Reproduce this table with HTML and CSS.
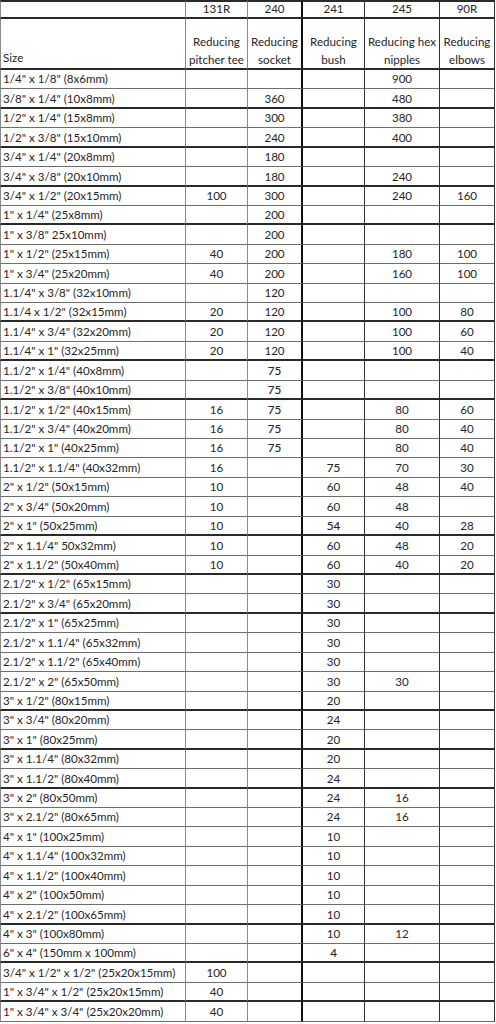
FILE: index.html
```
<!DOCTYPE html>
<html>
<head>
<meta charset="utf-8">
<link rel="stylesheet" href="styles.css">
</head>
<body>
<div class="sheet">
  <div class="row thick top">
    <div class="c s"></div><div class="c n">131R</div><div class="c n c3">240</div><div class="c n">241</div><div class="c n">245</div><div class="c n">90R</div>
  </div>
  <div class="row thick head">
    <div class="c s">Size</div><div class="c n">Reducing<br>pitcher tee</div><div class="c n c3">Reducing<br>socket</div><div class="c n">Reducing<br>bush</div><div class="c n">Reducing hex<br>nipples</div><div class="c n">Reducing<br>elbows</div>
  </div>
  <div class="row"><div class="c s">1/4" x 1/8" (8x6mm)</div><div class="c n"></div><div class="c n c3"></div><div class="c n"></div><div class="c n">900</div><div class="c n"></div></div>
  <div class="row thick"><div class="c s">3/8" x 1/4" (10x8mm)</div><div class="c n"></div><div class="c n c3">360</div><div class="c n"></div><div class="c n">480</div><div class="c n"></div></div>
  <div class="row"><div class="c s">1/2" x 1/4" (15x8mm)</div><div class="c n"></div><div class="c n c3">300</div><div class="c n"></div><div class="c n">380</div><div class="c n"></div></div>
  <div class="row thick"><div class="c s">1/2" x 3/8" (15x10mm)</div><div class="c n"></div><div class="c n c3">240</div><div class="c n"></div><div class="c n">400</div><div class="c n"></div></div>
  <div class="row"><div class="c s">3/4" x 1/4" (20x8mm)</div><div class="c n"></div><div class="c n c3">180</div><div class="c n"></div><div class="c n"></div><div class="c n"></div></div>
  <div class="row thick"><div class="c s">3/4" x 3/8" (20x10mm)</div><div class="c n"></div><div class="c n c3">180</div><div class="c n"></div><div class="c n">240</div><div class="c n"></div></div>
  <div class="row"><div class="c s">3/4" x 1/2" (20x15mm)</div><div class="c n">100</div><div class="c n c3">300</div><div class="c n"></div><div class="c n">240</div><div class="c n">160</div></div>
  <div class="row thick"><div class="c s">1" x 1/4" (25x8mm)</div><div class="c n"></div><div class="c n c3">200</div><div class="c n"></div><div class="c n"></div><div class="c n"></div></div>
  <div class="row"><div class="c s">1" x 3/8" 25x10mm)</div><div class="c n"></div><div class="c n c3">200</div><div class="c n"></div><div class="c n"></div><div class="c n"></div></div>
  <div class="row"><div class="c s">1" x 1/2" (25x15mm)</div><div class="c n">40</div><div class="c n c3">200</div><div class="c n"></div><div class="c n">180</div><div class="c n">100</div></div>
  <div class="row"><div class="c s">1" x 3/4" (25x20mm)</div><div class="c n">40</div><div class="c n c3">200</div><div class="c n"></div><div class="c n">160</div><div class="c n">100</div></div>
  <div class="row"><div class="c s">1.1/4" x 3/8" (32x10mm)</div><div class="c n"></div><div class="c n c3">120</div><div class="c n"></div><div class="c n"></div><div class="c n"></div></div>
  <div class="row thick"><div class="c s">1.1/4 x 1/2" (32x15mm)</div><div class="c n">20</div><div class="c n c3">120</div><div class="c n"></div><div class="c n">100</div><div class="c n">80</div></div>
  <div class="row"><div class="c s">1.1/4" x 3/4" (32x20mm)</div><div class="c n">20</div><div class="c n c3">120</div><div class="c n"></div><div class="c n">100</div><div class="c n">60</div></div>
  <div class="row thick"><div class="c s">1.1/4" x 1" (32x25mm)</div><div class="c n">20</div><div class="c n c3">120</div><div class="c n"></div><div class="c n">100</div><div class="c n">40</div></div>
  <div class="row"><div class="c s">1.1/2" x 1/4" (40x8mm)</div><div class="c n"></div><div class="c n c3 b">75</div><div class="c n"></div><div class="c n"></div><div class="c n"></div></div>
  <div class="row thick"><div class="c s">1.1/2" x 3/8" (40x10mm)</div><div class="c n"></div><div class="c n c3 b">75</div><div class="c n"></div><div class="c n"></div><div class="c n"></div></div>
  <div class="row"><div class="c s">1.1/2" x 1/2" (40x15mm)</div><div class="c n">16</div><div class="c n c3 b">75</div><div class="c n"></div><div class="c n">80</div><div class="c n">60</div></div>
  <div class="row"><div class="c s">1.1/2" x 3/4" (40x20mm)</div><div class="c n">16</div><div class="c n c3 b">75</div><div class="c n"></div><div class="c n">80</div><div class="c n">40</div></div>
  <div class="row"><div class="c s">1.1/2" x 1" (40x25mm)</div><div class="c n">16</div><div class="c n c3 b">75</div><div class="c n"></div><div class="c n">80</div><div class="c n">40</div></div>
  <div class="row"><div class="c s">1.1/2" x 1.1/4" (40x32mm)</div><div class="c n">16</div><div class="c n c3"></div><div class="c n b">75</div><div class="c n">70</div><div class="c n">30</div></div>
  <div class="row"><div class="c s">2" x 1/2" (50x15mm)</div><div class="c n">10</div><div class="c n c3"></div><div class="c n">60</div><div class="c n">48</div><div class="c n">40</div></div>
  <div class="row"><div class="c s">2" x 3/4" (50x20mm)</div><div class="c n">10</div><div class="c n c3"></div><div class="c n">60</div><div class="c n">48</div><div class="c n"></div></div>
  <div class="row thick"><div class="c s">2" x 1" (50x25mm)</div><div class="c n">10</div><div class="c n c3"></div><div class="c n b">54</div><div class="c n">40</div><div class="c n">28</div></div>
  <div class="row"><div class="c s">2" x 1.1/4" 50x32mm)</div><div class="c n">10</div><div class="c n c3"></div><div class="c n">60</div><div class="c n">48</div><div class="c n">20</div></div>
  <div class="row thick"><div class="c s">2" x 1.1/2" (50x40mm)</div><div class="c n">10</div><div class="c n c3"></div><div class="c n">60</div><div class="c n">40</div><div class="c n">20</div></div>
  <div class="row"><div class="c s">2.1/2" x 1/2" (65x15mm)</div><div class="c n"></div><div class="c n c3"></div><div class="c n">30</div><div class="c n"></div><div class="c n"></div></div>
  <div class="row thick"><div class="c s">2.1/2" x 3/4" (65x20mm)</div><div class="c n"></div><div class="c n c3"></div><div class="c n">30</div><div class="c n"></div><div class="c n"></div></div>
  <div class="row"><div class="c s">2.1/2" x 1" (65x25mm)</div><div class="c n"></div><div class="c n c3"></div><div class="c n">30</div><div class="c n"></div><div class="c n"></div></div>
  <div class="row"><div class="c s">2.1/2" x 1.1/4" (65x32mm)</div><div class="c n"></div><div class="c n c3"></div><div class="c n">30</div><div class="c n"></div><div class="c n"></div></div>
  <div class="row"><div class="c s">2.1/2" x 1.1/2" (65x40mm)</div><div class="c n"></div><div class="c n c3"></div><div class="c n">30</div><div class="c n"></div><div class="c n"></div></div>
  <div class="row"><div class="c s">2.1/2" x 2" (65x50mm)</div><div class="c n"></div><div class="c n c3"></div><div class="c n">30</div><div class="c n">30</div><div class="c n"></div></div>
  <div class="row thick"><div class="c s">3" x 1/2" (80x15mm)</div><div class="c n"></div><div class="c n c3"></div><div class="c n">20</div><div class="c n"></div><div class="c n"></div></div>
  <div class="row"><div class="c s">3" x 3/4" (80x20mm)</div><div class="c n"></div><div class="c n c3"></div><div class="c n">24</div><div class="c n"></div><div class="c n"></div></div>
  <div class="row thick"><div class="c s">3" x 1" (80x25mm)</div><div class="c n"></div><div class="c n c3"></div><div class="c n">20</div><div class="c n"></div><div class="c n"></div></div>
  <div class="row"><div class="c s">3" x 1.1/4" (80x32mm)</div><div class="c n"></div><div class="c n c3"></div><div class="c n">20</div><div class="c n"></div><div class="c n"></div></div>
  <div class="row thick"><div class="c s">3" x 1.1/2" (80x40mm)</div><div class="c n"></div><div class="c n c3"></div><div class="c n">24</div><div class="c n"></div><div class="c n"></div></div>
  <div class="row"><div class="c s">3" x 2" (80x50mm)</div><div class="c n"></div><div class="c n c3"></div><div class="c n">24</div><div class="c n">16</div><div class="c n"></div></div>
  <div class="row"><div class="c s">3" x 2.1/2" (80x65mm)</div><div class="c n"></div><div class="c n c3"></div><div class="c n">24</div><div class="c n">16</div><div class="c n"></div></div>
  <div class="row"><div class="c s">4" x 1" (100x25mm)</div><div class="c n"></div><div class="c n c3"></div><div class="c n">10</div><div class="c n"></div><div class="c n"></div></div>
  <div class="row"><div class="c s">4" x 1.1/4" (100x32mm)</div><div class="c n"></div><div class="c n c3"></div><div class="c n">10</div><div class="c n"></div><div class="c n"></div></div>
  <div class="row"><div class="c s">4" x 1.1/2" (100x40mm)</div><div class="c n"></div><div class="c n c3"></div><div class="c n">10</div><div class="c n"></div><div class="c n"></div></div>
  <div class="row"><div class="c s">4" x 2" (100x50mm)</div><div class="c n"></div><div class="c n c3"></div><div class="c n">10</div><div class="c n"></div><div class="c n"></div></div>
  <div class="row thick"><div class="c s">4" x 2.1/2" (100x65mm)</div><div class="c n"></div><div class="c n c3"></div><div class="c n">10</div><div class="c n"></div><div class="c n"></div></div>
  <div class="row"><div class="c s">4" x 3" (100x80mm)</div><div class="c n"></div><div class="c n c3"></div><div class="c n">10</div><div class="c n">12</div><div class="c n"></div></div>
  <div class="row thick"><div class="c s">6" x 4" (150mm x 100mm)</div><div class="c n"></div><div class="c n c3"></div><div class="c n b">4</div><div class="c n"></div><div class="c n"></div></div>
  <div class="row"><div class="c s">3/4" x 1/2" x 1/2" (25x20x15mm)</div><div class="c n">100</div><div class="c n c3"></div><div class="c n"></div><div class="c n"></div><div class="c n"></div></div>
  <div class="row thick"><div class="c s">1" x 3/4" x 1/2" (25x20x15mm)</div><div class="c n">40</div><div class="c n c3"></div><div class="c n"></div><div class="c n"></div><div class="c n"></div></div>
  <div class="row"><div class="c s">1" x 3/4" x 3/4" (25x20x20mm)</div><div class="c n">40</div><div class="c n c3"></div><div class="c n"></div><div class="c n"></div><div class="c n"></div></div>
</div>
</body>
</html>
```
FILE: styles.css
```
html, body {
  margin: 0;
  padding: 0;
  background: #ffffff;
}

.sheet {
  display: grid;
  grid-template-columns: 186px 62px 55px 62px 75px 55px;
  grid-template-rows: 19px 51px repeat(49, 19.43px);
  width: 496px;
  font-family: "Lato", "Liberation Sans", sans-serif;
  font-size: 11.6px;
  color: #262626;
}

.row {
  display: contents;
}

.c {
  box-sizing: border-box;
  border-bottom: 1px solid #6e6e6e;
  border-right: 1px solid #333333;
  display: flex;
  align-items: flex-end;
  line-height: 17px;
  padding-bottom: 1px;
  white-space: nowrap;
  overflow: hidden;
}

.row.thick .c {
  border-bottom: 2px solid #2a2a2a;
  padding-bottom: 0;
}

.row.top .c {
  border-top: 2px solid #2a2a2a;
}

.c.s {
  padding-left: 2px;
  border-left: 1px solid #8a8a8a;
  border-right-color: #8a8a8a;
}

.c.n {
  justify-content: center;
  text-align: center;
}

.c:nth-child(2) {
  border-right-color: #8a8a8a;
}

.c.c3 {
  border-right: 2px solid #111111;
}

.head .c {
  line-height: 17.5px;
  padding-bottom: 3px;
}

.head .c.s {
  padding-bottom: 2px;
}

.b {
  -webkit-text-stroke: 0.15px #262626;
}
```
